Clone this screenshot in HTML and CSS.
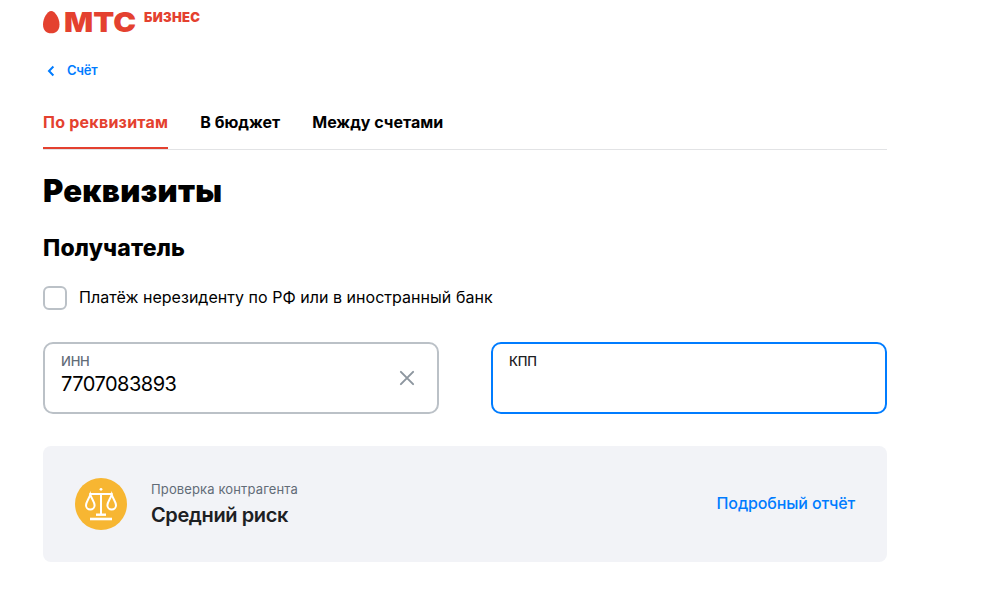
FILE: index.html
```html
<!DOCTYPE html>
<html lang="ru">
<head>
  <meta charset="UTF-8">
  <meta name="viewport" content="width=device-width, initial-scale=1.0">
  <title>МТС Бизнес</title>
  <link rel="stylesheet" href="styles.css">
</head>
<body>
  <div class="page">
    <header class="logo">
      <svg class="logo-egg" width="17" height="23" viewBox="0 0 17 23" fill="#e4412f">
        <path d="M8.2 0C12.2 0 16.5 7.4 16.5 13.4C16.5 19 13.4 22.2 8.2 22.2S0 19 0 13.4C0 7.4 4.2 0 8.2 0Z"/>
      </svg>
      <svg class="logo-mts" width="74" height="36" viewBox="0 0 74 36">
        <text x="0" y="26" textLength="72" lengthAdjust="spacingAndGlyphs">МТС</text>
      </svg>
      <span class="logo-sub">БИЗНЕС</span>
    </header>

    <a class="back" href="#">
      <svg width="8" height="12" viewBox="0 0 8 12" fill="none" stroke="#007cff" stroke-width="2">
        <path d="M6.4 1.5L2 6L6.4 10.5"/>
      </svg>
      <span>Счёт</span>
    </a>

    <nav class="tabs">
      <a class="tab tab-active" href="#">По реквизитам</a>
      <a class="tab" href="#">В бюджет</a>
      <a class="tab" href="#">Между счетами</a>
    </nav>

    <main>
      <h1>Реквизиты</h1>
      <h2>Получатель</h2>

      <label class="check">
        <input type="checkbox">
        <span>Платёж нерезиденту по РФ или в иностранный банк</span>
      </label>

      <div class="fields">
        <div class="field">
          <div class="field-body">
            <div class="field-label">ИНН</div>
            <div class="field-value">7707083893</div>
          </div>
          <svg width="16" height="16" viewBox="0 0 16 16" fill="none" stroke="#8d969f" stroke-width="2" stroke-linecap="round">
            <path d="M1.9 1.9L14.1 14.1M14.1 1.9L1.9 14.1"/>
          </svg>
        </div>
        <div class="field field-focus">
          <div class="field-body">
            <div class="field-label">КПП</div>
          </div>
        </div>
      </div>

      <section class="risk">
        <svg class="risk-icon" width="52" height="52" viewBox="0 0 52 52">
          <circle cx="26" cy="26" r="26" fill="#f7b632"/>
          <g fill="none" stroke="#fff" stroke-width="2">
            <path d="M14.4 16H37.6M26 16V36.5"/>
            <path d="M21 36.7H31" stroke-width="2.4"/>
            <path d="M15 41H37" stroke-width="2.6"/>
            <path d="M15.3 16.5C14 21 11 24 11 27.2A4.3 4.3 0 0 0 19.6 27.2C19.6 24 16.6 21 15.3 16.5Z"/>
            <path d="M36.7 16.5C35.4 21 32.4 24 32.4 27.2A4.3 4.3 0 0 0 41 27.2C41 24 38 21 36.7 16.5Z"/>
          </g>
          <circle cx="26" cy="11.3" r="1.4" fill="#fff"/>
        </svg>
        <div class="risk-text">
          <div class="risk-caption">Проверка контрагента</div>
          <div class="risk-level">Средний риск</div>
        </div>
        <a class="risk-link" href="#">Подробный отчёт</a>
      </section>
    </main>
  </div>
</body>
</html>
```

FILE: styles.css
```css
* {
  box-sizing: border-box;
}

body {
  margin: 0;
  background: #fff;
  color: #000;
  font-family: Inter, "Liberation Sans", sans-serif;
}

a {
  color: #007cff;
  text-decoration: none;
}

.page {
  width: 887px;
  padding: 10px 0 0 43px;
}

.logo {
  display: flex;
  align-items: flex-start;
  height: 52px;
}

.logo-egg {
  margin-top: 1px;
}

.logo-mts {
  margin: -4px 0 0 4px;
}

.logo-mts text {
  font-size: 27.5px;
  font-weight: 900;
  fill: #e4412f;
}

.logo-sub {
  margin-left: 6px;
  font-size: 13px;
  line-height: 14px;
  font-weight: 900;
  letter-spacing: 0.3px;
  color: #e4412f;
}

.back {
  display: flex;
  align-items: center;
  gap: 12px;
  height: 17px;
  padding-left: 4px;
  font-size: 13px;
  line-height: 15px;
  font-weight: 600;
  letter-spacing: -0.25px;
}

.tabs {
  display: flex;
  gap: 32px;
  height: 50px;
  margin-top: 21px;
  border-bottom: 1px solid #e2e3e5;
}

.tab {
  height: 49px;
  padding-top: 12px;
  font-size: 16px;
  line-height: 20px;
  font-weight: 700;
  letter-spacing: 0;
  color: #000;
}

.tab-active {
  letter-spacing: 0.24px;
  color: #e4412f;
  border-bottom: 2px solid #e4412f;
}

h1 {
  margin: 21px 0 0;
  font-size: 31px;
  line-height: 40px;
  font-weight: 900;
  letter-spacing: 0.25px;
}

h2 {
  margin: 22px 0 0;
  font-size: 23px;
  line-height: 30px;
  font-weight: 800;
  letter-spacing: 0.2px;
}

.check {
  display: flex;
  align-items: center;
  gap: 12px;
  height: 24px;
  margin-top: 23px;
  font-size: 16px;
  letter-spacing: 0.03px;
}

.check span {
  padding-bottom: 2px;
}

.check input {
  appearance: none;
  width: 24px;
  height: 24px;
  margin: 0;
  border: 2px solid #bbc1c7;
  border-radius: 6px;
}

.fields {
  display: grid;
  grid-template-columns: 1fr 1fr;
  gap: 52px;
  margin-top: 32px;
}

.field {
  display: flex;
  align-items: center;
  justify-content: space-between;
  height: 72px;
  padding: 0 22px 0 16px;
  border: 2px solid #bbc1c7;
  border-radius: 10px;
}

.field-body {
  align-self: flex-start;
  padding-top: 9px;
}

.field-label {
  font-size: 13px;
  line-height: 16px;
  font-weight: 500;
  letter-spacing: -0.2px;
  color: #626c77;
}

.field-value {
  margin-top: 2px;
  font-size: 20px;
  line-height: 26px;
  letter-spacing: -0.5px;
}

.field-focus {
  border-color: #007cff;
}

.field-focus .field-label {
  color: #1d2023;
}

.risk {
  display: flex;
  align-items: center;
  height: 116px;
  margin-top: 32px;
  padding: 0 32px;
  border-radius: 8px;
  background: #f2f3f7;
}

.risk-text {
  margin-left: 24px;
}

.risk-caption {
  font-size: 13px;
  line-height: 20px;
  letter-spacing: 0.13px;
  color: #626c77;
}

.risk-level {
  margin-top: 2px;
  font-size: 20px;
  line-height: 28px;
  font-weight: 600;
  letter-spacing: -0.4px;
  color: #1d2023;
}

.risk-link {
  margin-left: auto;
  padding-bottom: 2px;
  font-size: 16px;
  font-weight: 500;
  letter-spacing: -0.13px;
}
```
